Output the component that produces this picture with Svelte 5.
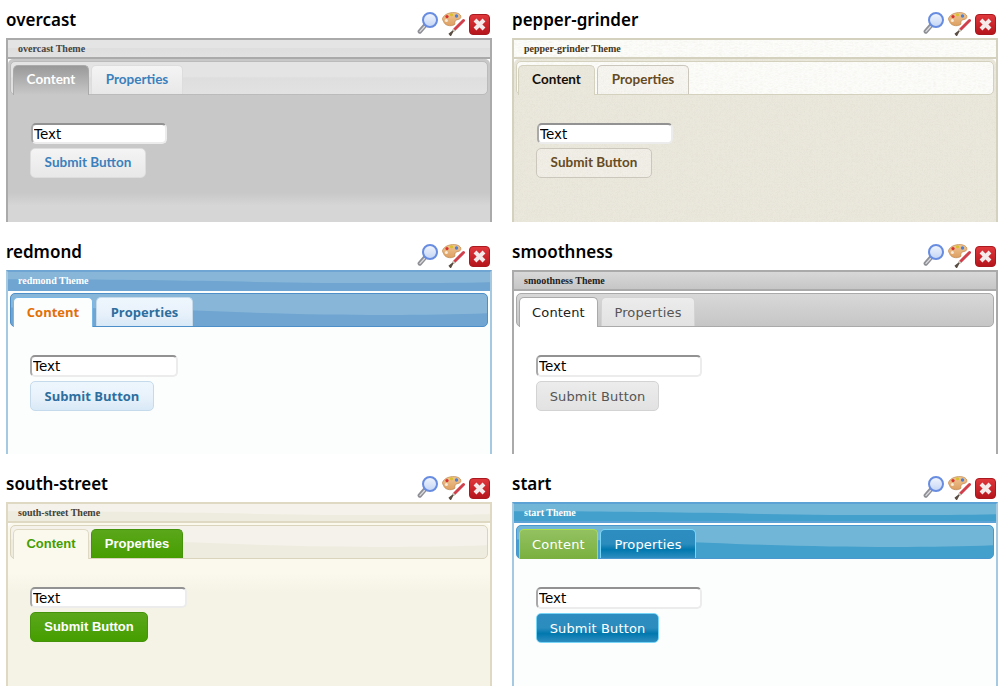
<script lang="ts">
const themes = [
  { id: "overcast", inputWidth: 136 },
  { id: "pepper-grinder", inputWidth: 136 },
  { id: "redmond", inputWidth: 148 },
  { id: "smoothness", inputWidth: 166 },
  { id: "south-street", inputWidth: 157 },
  { id: "start", inputWidth: 166 },
];
</script>

<svg class="defs" width="0" height="0" aria-hidden="true">
  <defs>
    <linearGradient id="lens" x1="0" y1="0" x2="0" y2="1">
      <stop offset="0" stop-color="#f2f6fe" />
      <stop offset="1" stop-color="#c4d5f4" />
    </linearGradient>
    <linearGradient id="redbox" x1="0" y1="0" x2="0" y2="1">
      <stop offset="0" stop-color="#e0383d" />
      <stop offset="1" stop-color="#b5141b" />
    </linearGradient>
    <linearGradient id="wood" x1="0" y1="0" x2="0" y2="1">
      <stop offset="0" stop-color="#f0c795" />
      <stop offset="1" stop-color="#dd9f62" />
    </linearGradient>
  </defs>
</svg>

{#snippet icons()}
  <div class="icons">
    <svg class="zoom-icon" width="22" height="23" viewBox="0 0 22 23">
      <path d="M8 13.5 L2.8 19.5" stroke="#8f9096" stroke-width="4.4" stroke-linecap="round" />
      <path d="M7.5 14.5 L3 19.4" stroke="#dcdce0" stroke-width="1.3" stroke-linecap="round" />
      <circle cx="13" cy="8" r="7" fill="url(#lens)" stroke="#678ce0" stroke-width="2" />
    </svg>
    <svg class="paint-icon" width="23" height="24" viewBox="0 0 23 24">
      <path d="M0.5 6.5 C2 2 9 -0.5 15 1 C20 2.4 20 7 16 7.5 C13 8 12.5 10 13 12 C11 14.5 4 14.5 2 10.5 C1.4 9 0.4 8 0.5 6.5 Z" fill="url(#wood)" stroke="#bd8549" stroke-width="0.7" />
      <circle cx="5" cy="4.6" r="1.6" fill="#d8322e" />
      <circle cx="9.5" cy="2.8" r="1.6" fill="#d9c02c" />
      <circle cx="14.5" cy="4" r="1.7" fill="#4b7fd6" />
      <circle cx="4.4" cy="8.6" r="1.5" fill="#f6ead9" />
      <path d="M21.5 8.5 L12.5 17.5" stroke="#cf3f4c" stroke-width="3" stroke-linecap="round" />
      <path d="M12.4 17.6 L10.8 19.2" stroke="#c9c4b8" stroke-width="3" />
      <path d="M11 19 L8.6 23.4 L7.4 21.8 Z" fill="#5a4e44" stroke="#5a4e44" stroke-width="1.4" />
    </svg>
    <svg class="close-icon" width="21" height="21" viewBox="0 0 21 21">
      <rect x="0.5" y="0.5" width="20" height="20" rx="3.5" fill="url(#redbox)" stroke="#a91a20" />
      <path d="M6 6 L15 15 M15 6 L6 15" stroke="#f6eaea" stroke-width="4" />
    </svg>
  </div>
{/snippet}

<main class="page">
  {#each themes as t}
    <section class="cell {t.id}">
      <header class="cell-head">
        <h2>{t.id}</h2>
        {@render icons()}
      </header>
      <div class="panel">
        <div class="titlebar">{t.id} Theme</div>
        <div class="content">
          <div class="tabs">
            <div class="tab active">Content</div>
            <div class="tab second">Properties</div>
          </div>
          <div class="body">
            <input type="text" value="Text" style="width: {t.inputWidth}px" />
            <button type="button">Submit Button</button>
          </div>
        </div>
      </div>
    </section>
  {/each}
</main>

<style>
  :global(body) {
    background: #fff;
  }
  .defs {
    position: absolute;
  }
  .page {
    width: 1008px;
    height: 698px;
    box-sizing: border-box;
    padding-left: 6px;
    display: grid;
    grid-template-columns: 486px 486px;
    grid-auto-rows: 232px;
    column-gap: 20px;
    overflow: hidden;
  }
  .cell {
    display: flex;
    flex-direction: column;
  }
  .cell-head {
    height: 38px;
    display: flex;
    justify-content: space-between;
  }
  h2 {
    margin: 9px 0 0;
    font: 600 17px/22px "Noto Sans", sans-serif;
    color: #000;
  }
  .icons {
    display: flex;
    margin: 12px 2px 0 0;
    align-items: flex-start;
  }
  .paint-icon {
    margin-left: 3px;
  }
  .close-icon {
    margin: 2px 0 0 4px;
  }

  .panel {
    height: 184px;
    box-sizing: border-box;
    border: 2px solid var(--side, var(--border));
    border-top-color: var(--border);
    border-bottom: 0;
    background: #fff;
    display: flex;
    flex-direction: column;
  }
  .titlebar {
    height: 19px;
    flex: none;
    box-sizing: border-box;
    padding: 2px 0 0 10px;
    font: bold 10px/13px "Liberation Serif", serif;
    color: var(--title-color);
    background: var(--bar-bg);
    background-size: 100% 100%;
    border-bottom: 2px solid var(--border);
  }
  .content {
    flex: 1;
    padding-top: 2px;
    display: flex;
    flex-direction: column;
    border-radius: 5px 5px 0 0;
    background: var(--body-bg);
  }
  .tabs {
    height: 34px;
    flex: none;
    margin: 0 2px;
    box-sizing: border-box;
    padding: 3px 0 0 var(--tabs-left, 2px);
    display: flex;
    align-items: flex-start;
    gap: var(--tab-gap, 2px);
    border: 1px solid var(--tabs-border);
    border-radius: 5px;
    background: var(--bar-bg);
    background-size: 100% 100%;
  }
  .tab {
    box-sizing: border-box;
    height: 29px;
    width: var(--tab1);
    padding: var(--nudge-t, 0px) 0 var(--nudge-b, 0px);
    display: flex;
    align-items: center;
    justify-content: center;
    font: var(--tab-font);
    letter-spacing: var(--track, 0);
    border: 1px solid var(--tab-border);
    border-bottom: 0;
    border-radius: 5px 5px 0 0;
    background: var(--tab-bg);
    color: var(--tab-color);
  }
  .tab.second {
    width: var(--tab2);
  }
  .tab.active {
    height: 30px;
    padding-bottom: calc(var(--nudge-b, 0px) + 1px);
    border-color: var(--active-border);
    background: var(--active-bg);
    color: var(--active-color);
  }
  .body {
    flex: 1;
    padding: 28px 0 0 22px;
    display: flex;
    flex-direction: column;
    align-items: flex-start;
    gap: 4px;
  }
  input {
    box-sizing: border-box;
    height: var(--input-h, 22px);
    margin-left: var(--input-left, 0);
    padding: 0 2px 0 1px;
    font: 13.5px/16px "DejaVu Sans", sans-serif;
    color: #000;
    background: #fff;
    border: 2px solid #ececec;
    border-top-color: #929292;
    border-left-color: #a9a9a9;
    border-radius: 5px;
    outline: 0;
  }
  button {
    box-sizing: border-box;
    height: 30px;
    width: var(--btn);
    padding: var(--nudge-t, 0px) 0 var(--nudge-b, 0px);
    font: var(--tab-font);
    letter-spacing: var(--track, 0);
    border: 1px solid var(--tab-border);
    border-radius: 5px;
    background: var(--btn-bg, var(--tab-bg));
    color: var(--tab-color);
  }

  .overcast {
    --tab1: 76px;
    --tab2: 92px;
    --btn: 116px;
    --input-h: 21px;
    --input-left: 1px;
    --nudge-b: 2px;
    --border: #aaaaaa;
    --tabs-border: #bbbbbb;
    --title-color: #444;
    --bar-bg: linear-gradient(#e4e4e4 0, #e4e4e4 45%, #dedede 50%, #e2e2e2 100%);
    --body-bg: linear-gradient(#c8c8c8 0, #c8c8c8 82%, #d6d6d6 90%, #d6d6d6 100%);
    --tab-font: bold 13.5px/16px "Lato", sans-serif;
    --tab-border: #dddddd;
    --tab-bg: linear-gradient(#f4f4f4, #e8e8e8);
    --tab-color: #3a80bd;
    --active-border: #aaaaaa;
    --active-bg: linear-gradient(#999999, #c8c8c8);
    --active-color: #fff;
  }
  .pepper-grinder {
    --tab1: 77px;
    --tab2: 92px;
    --btn: 116px;
    --input-h: 21px;
    --input-left: 1px;
    --nudge-b: 2px;
    --tabs-left: 1px;
    --noise: url("data:image/svg+xml,%3Csvg xmlns='http://www.w3.org/2000/svg' width='160' height='160'%3E%3Cfilter id='n'%3E%3CfeTurbulence baseFrequency='.6' numOctaves='2'/%3E%3CfeColorMatrix values='0 0 0 0 .45 0 0 0 0 .42 0 0 0 0 .32 0 0 0 .16 0'/%3E%3C/filter%3E%3Crect width='160' height='160' filter='url(%23n)'/%3E%3C/svg%3E");
    --border: #d4d1bf;
    --tabs-border: #d4d1bf;
    --title-color: #453821;
    --bar-bg: var(--noise), #fdfdfb;
    --body-bg: var(--noise), #ebe8dd;
    --tab-font: bold 13.5px/16px "Lato", sans-serif;
    --tab-border: #cbc7bd;
    --tab-bg: var(--noise), #f8f6f1;
    --btn-bg: var(--noise), #f2efe8;
    --tab-color: #654b24;
    --active-border: #d4d1bf;
    --active-bg: var(--noise), #ebe8dd;
    --active-color: #140f06;
  }
  .redmond {
    --tab1: 80px;
    --tab2: 97px;
    --btn: 124px;
    --tab-gap: 3px;
    --border: #6ea5d2;
    --side: #a6c9e2;
    --tabs-border: #4c8fc9;
    --title-color: #fff;
    --bar-bg: url("data:image/svg+xml,%3Csvg xmlns='http://www.w3.org/2000/svg' viewBox='0 0 100 100' preserveAspectRatio='none'%3E%3Cpath d='M0 0H100V60C85 68 65 68 40 52C25 45 10 42 0 42Z' fill='%2388b6d9'/%3E%3C/svg%3E"), #6fa5d0;
    --body-bg: #fcfdfd;
    --tab-font: bold 13px/16px "Open Sans", sans-serif;
    --tab-border: #c5dbec;
    --tab-bg: linear-gradient(#eef6fd 0, #e9f2fb 50%, #d9e9f7 100%);
    --tab-color: #2e6e9e;
    --active-border: #79b7e7;
    --active-bg: #fcfdfd;
    --active-color: #e17009;
  }
  .smoothness {
    --tab1: 79px;
    --tab2: 94px;
    --btn: 123px;
    --tab-gap: 3px;
    --track: 0.15px;
    --nudge-t: 2px;
    --border: #aaaaaa;
    --tabs-border: #aaaaaa;
    --title-color: #222;
    --bar-bg: linear-gradient(#d8d8d8, #c6c6c6);
    --body-bg: #fff;
    --tab-font: 13px/16px "DejaVu Sans", sans-serif;
    --tab-border: #d3d3d3;
    --tab-bg: linear-gradient(#ececec, #e2e2e2);
    --tab-color: #555555;
    --active-border: #aaaaaa;
    --active-bg: #fff;
    --active-color: #212121;
  }
  .south-street {
    --tab1: 76px;
    --tab2: 92px;
    --btn: 118px;
    --input-h: 21px;
    --border: #dfd9c3;
    --tabs-border: #dad4bc;
    --title-color: #433f38;
    --bar-bg: url("data:image/svg+xml,%3Csvg xmlns='http://www.w3.org/2000/svg' viewBox='0 0 100 100' preserveAspectRatio='none'%3E%3Cpath d='M0 0H100V60C85 68 65 68 40 52C25 45 10 42 0 42Z' fill='%23f4f2ea'/%3E%3C/svg%3E"), #eeebdf;
    --body-bg: linear-gradient(#fbf9ee 0, #fbf9ee 50px, #f5f3e5 70px);
    --tab-font: bold 13px/16px "Liberation Sans", sans-serif;
    --tab-border: #45930b;
    --tab-bg: linear-gradient(#5ba71b, #459e00);
    --tab-color: #fff;
    --active-border: #dfd9c3;
    --active-bg: #fbf9ee;
    --active-color: #459e00;
  }
  .start {
    --tab1: 79px;
    --tab2: 96px;
    --btn: 123px;
    --track: 0.15px;
    --nudge-t: 2px;
    --border: #5ca2d4;
    --side: #a6c9e2;
    --tabs-border: #4a97d0;
    --title-color: #fff;
    --bar-bg: url("data:image/svg+xml,%3Csvg xmlns='http://www.w3.org/2000/svg' viewBox='0 0 100 100' preserveAspectRatio='none'%3E%3Cpath d='M0 0H100V60C85 68 65 68 40 52C25 45 10 42 0 42Z' fill='%2372b6d7'/%3E%3C/svg%3E"), #43a0cc;
    --body-bg: #fcfdfd;
    --tab-font: 13px/16px "DejaVu Sans", sans-serif;
    --tab-border: #77d5f7;
    --tab-bg: linear-gradient(#2e8dc0 0, #2b8cbe 50%, #0078ae 70%, #2e8dc0 100%);
    --tab-color: #fff;
    --active-border: #acdd4a;
    --active-bg: linear-gradient(#93c161, #7ab03f);
    --active-color: #fff;
  }
</style>
